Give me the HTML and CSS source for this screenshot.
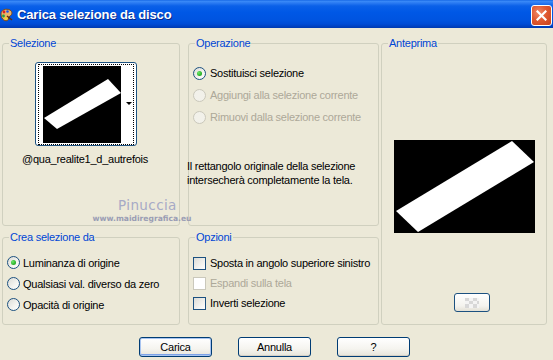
FILE: index.html
```html
<!DOCTYPE html>
<html lang="it">
<head>
<meta charset="utf-8">
<title>Carica selezione da disco</title>
<link rel="stylesheet" href="styles.css">
</head>
<body>
<div class="window">
  <div class="titlebar">
    <svg class="app-icon" width="13" height="14" viewBox="0 0 13 14">
      <path d="M1 6 C1 2 6 0 10 2 C13 4 12 7 10 8 C8 9 9 11 8 12 C6 14 1 12 1 6 Z" fill="#E9B36A" stroke="#7A4A1A" stroke-width="1"/>
      <circle cx="4" cy="4" r="1.4" fill="#E02020"/>
      <circle cx="7.5" cy="3.5" r="1.3" fill="#2050E0"/>
      <circle cx="3.5" cy="8" r="1.4" fill="#20A040"/>
      <circle cx="6" cy="10.5" r="1.2" fill="#F0E020"/>
      <path d="M7 8 L12 12" stroke="#5A3010" stroke-width="1.5"/>
    </svg>
    <span class="title">Carica selezione da disco</span>
    <span class="close-btn">
      <svg width="11" height="11" viewBox="0 0 11 11"><path d="M1.5 1.5 L9.5 9.5 M9.5 1.5 L1.5 9.5" stroke="#fff" stroke-width="2.2" stroke-linecap="square"/></svg>
    </span>
  </div>

  <div class="content">
    <fieldset class="group g-sel">
      <legend>Selezione</legend>
      <div class="thumb">
        <div class="thumb-focus">
          <svg class="thumb-img" width="78" height="77" viewBox="0 0 78 77">
            <rect width="78" height="77" fill="#000"/>
            <polygon points="1,52 65,13 78,27 14,63" fill="#fff"/>
          </svg>
          <span class="thumb-arrow"></span>
        </div>
      </div>
      <div class="sel-name">@qua_realite1_d_autrefois</div>
    </fieldset>

    <fieldset class="group g-op">
      <legend>Operazione</legend>
      <div class="opt-list op-list">
        <div class="row"><span class="radio checked"></span><span>Sostituisci selezione</span></div>
        <div class="row disabled"><span class="radio"></span><span>Aggiungi alla selezione corrente</span></div>
        <div class="row disabled"><span class="radio"></span><span>Rimuovi dalla selezione corrente</span></div>
      </div>
      <p class="info">Il rettangolo originale della selezione<br>intersecherà completamente la tela.</p>
    </fieldset>

    <fieldset class="group g-prev">
      <legend>Anteprima</legend>
      <svg class="preview" width="141" height="93" viewBox="0 0 141 93">
        <rect width="141" height="93" fill="#000"/>
        <polygon points="2,71 118,1 140,22 24,92" fill="#fff"/>
      </svg>
      <span class="small-btn">
        <svg width="14" height="10" viewBox="0 0 14 10">
          <rect width="14" height="10" fill="#f4f4f4"/>
          <rect x="0" y="0" width="4" height="3" fill="#d8d8d8"/>
          <rect x="8" y="0" width="4" height="3" fill="#d8d8d8"/>
          <rect x="4" y="3" width="4" height="3" fill="#d8d8d8"/>
          <rect x="12" y="3" width="2" height="3" fill="#d8d8d8"/>
          <rect x="0" y="6" width="4" height="4" fill="#d8d8d8"/>
          <rect x="8" y="6" width="4" height="4" fill="#d8d8d8"/>
        </svg>
      </span>
    </fieldset>

    <fieldset class="group g-crea">
      <legend>Crea selezione da</legend>
      <div class="opt-list crea-list">
        <div class="row"><span class="radio checked"></span><span>Luminanza di origine</span></div>
        <div class="row"><span class="radio"></span><span>Qualsiasi val. diverso da zero</span></div>
        <div class="row"><span class="radio"></span><span>Opacità di origine</span></div>
      </div>
    </fieldset>

    <fieldset class="group g-opt">
      <legend>Opzioni</legend>
      <div class="opt-list chk-list">
        <div class="row"><span class="check"></span><span>Sposta in angolo superiore sinistro</span></div>
        <div class="row disabled"><span class="check"></span><span>Espandi sulla tela</span></div>
        <div class="row"><span class="check"></span><span>Inverti selezione</span></div>
      </div>
    </fieldset>
  </div>

  <div class="buttons">
    <span class="btn default">Carica</span>
    <span class="btn">Annulla</span>
    <span class="btn">?</span>
  </div>

  <div class="watermark">
    <span class="wm-name">Pinuccia</span>
    <span class="wm-url">www.maidiregrafica.eu</span>
  </div>
</div>
</body>
</html>
```
FILE: styles.css
```css
* { box-sizing: border-box; }

html, body {
  margin: 0;
  padding: 0;
  background: #ECE9D8;
}

body {
  font-family: "Liberation Sans", Arial, sans-serif;
  font-size: 11px;
  letter-spacing: -0.25px;
  color: #000;
}

.window {
  position: relative;
  width: 553px;
  height: 360px;
  background: #ECE9D8;
  overflow: hidden;
}

/* Title bar */
.titlebar {
  height: 28px;
  display: flex;
  align-items: center;
  background: linear-gradient(to bottom,
    #0A5CE0 0px, #3C8CF8 1px, #2A7AF2 3px, #0A60E8 6px,
    #0058E6 12px, #0054E0 20px, #004CD6 24px, #0043C4 26px, #003AB0 28px);
}

.app-icon {
  margin-left: 0;
  margin-top: 2px;
  flex: none;
}

.title {
  margin-left: 4px;
  color: #fff;
  font-weight: bold;
  font-size: 13px;
  letter-spacing: -0.15px;
  text-shadow: 1px 1px 0 #0A2A8A;
  margin-top: 1px;
}

.close-btn {
  margin-left: auto;
  margin-right: 1px;
  width: 21px;
  height: 21px;
  border: 1px solid #fff;
  border-radius: 3px;
  background: radial-gradient(circle at 35% 35%, #F08A6A 0%, #E05A32 45%, #C8401C 100%);
  display: flex;
  align-items: center;
  justify-content: center;
  margin-top: 2px;
}

/* Content grid */
.content {
  display: grid;
  grid-template-columns: 178px 199px 168px;
  grid-template-rows: 189px 94px;
  row-gap: 5px;
  padding: 9px 0 0 2px;
}

.group {
  margin: 0;
  padding: 0;
  border: 1px solid #D0D0BF;
  border-radius: 3px;
  min-width: 0;
}

.group legend {
  color: #0046D5;
  font-size: 11px;
  line-height: 13px;
  padding: 0 1px;
  margin-left: 6px;
}

.g-sel { grid-column: 1; grid-row: 1; }
.g-op { grid-column: 2; grid-row: 1; margin-left: 8px; }
.g-prev { grid-column: 3; grid-row: 1 / 3; margin-left: 2px; }
.g-crea { grid-column: 1; grid-row: 2; }
.g-opt { grid-column: 2; grid-row: 2; margin-left: 8px; }

/* Selezione thumbnail */
.thumb {
  margin: 12px 0 0 32px;
  width: 102px;
  height: 84px;
  border: 1px solid #1C5180;
  border-radius: 3px;
  background: #fff;
  padding: 1px 2px 0 2px;
}

.thumb-focus {
  position: relative;
  height: 81px;
  border: 1px dotted #000;
  padding: 1px 12px 1px 4px;
}

.thumb-img { display: block; }

.thumb-arrow {
  position: absolute;
  right: 1px;
  top: 37px;
  width: 0;
  height: 0;
  border-left: 3px solid transparent;
  border-right: 3px solid transparent;
  border-top: 3px solid #000;
}

.sel-name {
  margin: 7px 0 0 19px;
  line-height: 13px;
}

/* option rows */
.opt-list { display: flex; flex-direction: column; }

.row {
  display: flex;
  align-items: center;
  gap: 4px;
  white-space: nowrap;
}

.row.disabled { color: #ACA899; }

.op-list { padding: 12px 0 0 4px; }
.op-list .row { height: 22px; }

.crea-list { padding: 8px 0 0 4px; }
.crea-list .row { height: 21px; gap: 3px; }

.chk-list { padding: 9px 0 0 4px; }
.chk-list .row { height: 20px; }

.radio {
  flex: none;
  position: relative;
  width: 13px;
  height: 13px;
  border: 1px solid #1C5180;
  border-radius: 50%;
  background: linear-gradient(135deg, #DCDCD7 0%, #F4F4F0 60%, #fff 100%);
}

.row.disabled .radio {
  border-color: #CAC8BB;
  background: #F2F1EA;
}

.radio.checked::after {
  content: "";
  position: absolute;
  left: 3px;
  top: 3px;
  width: 5px;
  height: 5px;
  border-radius: 50%;
  background: radial-gradient(circle at 35% 35%, #6CE86A 0%, #2DB32B 60%, #1E901C 100%);
}

.check {
  flex: none;
  width: 13px;
  height: 13px;
  border: 1px solid #1C5180;
  background: linear-gradient(135deg, #DCDCD7 0%, #F2F2EE 60%, #fff 100%);
}

.row.disabled .check {
  border-color: #CAC8BB;
  background: #fff;
}

.info {
  margin: 31px 0 0 -2px;
  line-height: 14px;
}

/* Preview */
.preview {
  display: block;
  margin: 90px 0 0 12px;
}

.small-btn {
  display: flex;
  align-items: center;
  justify-content: center;
  margin: 60px 0 0 72px;
  width: 36px;
  height: 19px;
  border: 1px solid #1C5180;
  border-radius: 3px;
  background: linear-gradient(to bottom, #FFFFFF 0%, #F4F3EE 70%, #E3E1D6 100%);
}

/* Buttons */
.buttons {
  display: flex;
  gap: 26px;
  padding: 12px 0 0 139px;
}

.btn {
  width: 73px;
  height: 20px;
  display: flex;
  align-items: center;
  justify-content: center;
  border: 1px solid #003C74;
  border-radius: 3px;
  background: linear-gradient(to bottom, #FFFFFF 0%, #F5F4EF 60%, #E6E4DA 100%);
  box-shadow: inset 0 -1px 0 #D6D0C5;
}

.btn.default {
  box-shadow: inset 0 0 0 1px #A8C4F0, inset 0 -2px 0 #7DA2E8;
}

/* Watermark overlay */
.watermark {
  position: absolute;
  left: 96px;
  top: 198px;
  width: 92px;
  display: flex;
  flex-direction: column;
  align-items: center;
  pointer-events: none;
  letter-spacing: 0;
}

.wm-name {
  align-self: flex-start;
  margin-left: 22px;
  font-family: "DejaVu Sans", sans-serif;
  font-size: 13.5px;
  line-height: 14px;
  color: #A7AAC6;
  letter-spacing: 0.4px;
}

.wm-url {
  margin-top: 2px;
  font-family: "DejaVu Sans", sans-serif;
  font-size: 7.6px;
  line-height: 9px;
  font-weight: bold;
  color: #9A9DB4;
}
```
